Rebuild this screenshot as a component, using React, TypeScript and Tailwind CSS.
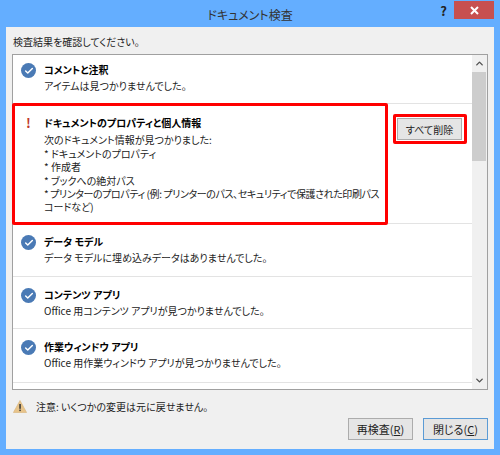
import React from 'react';
import { Check, ChevronUp, ChevronDown } from 'lucide-react';

const font = `[font-family:'Noto_Sans_CJK_JP','Liberation_Sans',sans-serif] [font-feature-settings:'palt']`;

interface Item {
  title: string;
  line: string;
  height: string;
}

const CheckBadge = () => (
  <span className="w-[15px] h-[15px] rounded-full bg-[#4a7ab5] flex items-center justify-center shrink-0">
    <Check size={10} strokeWidth={3.5} className="text-white" />
  </span>
);

const ResultRow = ({ title, line, height }: Item) => (
  <div className={`flex ${height} pl-[8px] pt-[10px] border-b border-[#e3e3e3]`}>
    <div className="w-[23px] pt-[1px]">
      <CheckBadge />
    </div>
    <div className="text-[10px] leading-[16px] text-[#222]">
      <div className="font-bold text-black">{title}</div>
      <div>{line}</div>
    </div>
  </div>
);

const items: Item[] = [
  { title: 'データ モデル', line: 'データ モデルに埋め込みデータはありませんでした。', height: 'h-[53px]' },
  { title: 'コンテンツ アプリ', line: 'Office 用コンテンツ アプリが見つかりませんでした。', height: 'h-[52px]' },
  { title: '作業ウィンドウ アプリ', line: 'Office 用作業ウィンドウ アプリが見つかりませんでした。', height: 'h-[54px]' },
];

export default function App() {
  return (
    <div className={`w-[500px] h-[455px] bg-[#64aeff] px-[6px] pb-[6px] flex flex-col ${font}`}>
      <div className="h-[27px] shrink-0 relative flex items-center justify-center text-[12px] text-[#333] pt-[3px]">
        ドキュメント検査
        <span className="absolute right-[47px] top-[1px] text-[13px] font-bold text-[#222]">?</span>
        <span className="absolute right-0 top-[1px] w-[40px] h-[18px] bg-[#c75050] flex items-center justify-center">
          <svg width="9" height="9" viewBox="0 0 9 9">
            <path d="M1 1 L8 8 M8 1 L1 8" stroke="#fff" strokeWidth="2" />
          </svg>
        </span>
      </div>

      <div className="flex-1 bg-[#f0f0f0] px-[6px] flex flex-col">
        <div className="h-[27px] shrink-0 flex items-center text-[10px] text-[#222] pl-[1px] pt-[1px]">検査結果を確認してください。</div>

        <div className="h-[336px] shrink-0 bg-white border border-[#a0a0a0] flex relative">
          <div className="flex-1 min-w-0">
            <div className="flex h-[49px] pl-[8px] pt-[7px] border-b border-[#e3e3e3]">
              <div className="w-[23px] pt-[1px]">
                <CheckBadge />
              </div>
              <div className="text-[10px] leading-[16px] text-[#222]">
                <div className="font-bold text-black">コメントと注釈</div>
                <div>アイテムは見つかりませんでした。</div>
              </div>
            </div>

            <div className="flex h-[120px] pl-[8px] pt-[11px] border-b border-[#e3e3e3]">
              <div className="w-[23px] pl-[5px] text-[13px] leading-[15px] font-bold text-[#c0392b]">!</div>
              <div className="w-[338px] text-[10px] leading-[13.4px] text-[#222]">
                <div className="font-bold text-black mb-[4px] mt-[1px]">ドキュメントのプロパティと個人情報</div>
                <div>次のドキュメント情報が見つかりました:</div>
                <div>* ドキュメントのプロパティ</div>
                <div>* 作成者</div>
                <div>* ブックへの絶対パス</div>
                <div className="whitespace-nowrap tracking-[-0.4px]">* プリンターのプロパティ (例: プリンターのパス、セキュリティで保護された印刷パス</div>
                <div>コードなど)</div>
              </div>
              <button className="ml-[15px] mt-[3px] w-[65px] h-[22px] shrink-0 bg-[#e5e5e5] border border-[#acacac] text-[10px] text-[#222]">
                すべて削除
              </button>
            </div>

            {items.map((it) => (
              <ResultRow key={it.title} title={it.title} line={it.line} height={it.height} />
            ))}
          </div>

          <div className="w-[15px] shrink-0 bg-[#f0f0f0] flex flex-col pr-[1px]">
            <div className="h-[17px] flex items-center justify-center">
              <ChevronUp size={11} strokeWidth={3} className="text-[#505050]" />
            </div>
            <div className="h-[89px] bg-[#cdcdcd]" />
            <div className="flex-1" />
            <div className="h-[17px] flex items-center justify-center">
              <ChevronDown size={11} strokeWidth={3} className="text-[#505050]" />
            </div>
          </div>

          {/* red annotation frames */}
          <div className="absolute left-[-1px] top-[48px] w-[376px] h-[122px] border-[3px] border-[#f00] rounded-[2px]" />
          <div className="absolute left-[380px] top-[59px] w-[74px] h-[30px] border-[3px] border-[#f00] rounded-[2px]" />
        </div>

        <div className="h-[28px] shrink-0 flex items-center text-[10px] text-[#222] pt-[5px]">
          <svg width="14" height="13" viewBox="0 0 14 13" className="ml-[1px] mr-[9px] shrink-0">
            <path d="M7 0.5 L13.6 12.5 H0.4 Z" fill="#e8c48a" stroke="#d9b47a" strokeWidth="0.6" />
            <rect x="6.3" y="4" width="1.5" height="4.8" fill="#333" />
            <rect x="6.3" y="9.6" width="1.5" height="1.5" fill="#333" />
          </svg>
          注意: いくつかの変更は元に戻せません。
        </div>

        <div className="flex justify-end gap-[10px] -mr-[1px] pr-[1px]">
          <button className="w-[65px] h-[22px] bg-[#e5e5e5] border border-[#acacac] text-[11px] text-[#222]">
            再検査(<span className="underline">R</span>)
          </button>
          <button className="w-[65px] h-[22px] bg-[#e5e5e5] border border-[#5b9bd5] text-[11px] text-[#222]">
            閉じる(<span className="underline">C</span>)
          </button>
        </div>
      </div>
    </div>
  );
}
